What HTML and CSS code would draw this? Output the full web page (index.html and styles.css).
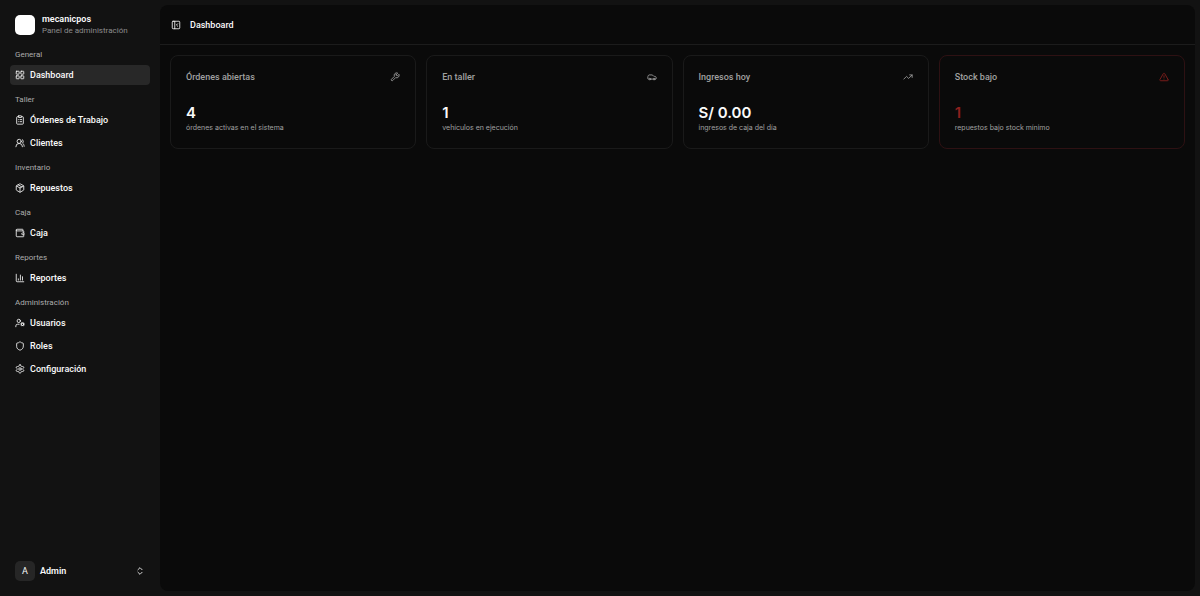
FILE: index.html
```html
<!DOCTYPE html>
<html lang="es">

<head>
    <meta charset="UTF-8">
    <meta name="viewport" content="width=device-width, initial-scale=1.0">
    <title>Dashboard - mecanicpos</title>
    <link rel="stylesheet" href="styles.css">
</head>

<body>
    <aside class="sidebar">
        <a href="#" class="brand">
            <span class="brand-logo"></span>
            <span class="brand-text">
                <span class="brand-name">mecanicpos</span>
                <span class="brand-sub">Panel de administración</span>
            </span>
        </a>

        <nav class="nav">
            <div class="nav-group">
                <div class="nav-label">General</div>
                <a href="#" class="nav-item active">
                    <svg class="icon" viewBox="0 0 24 24"><rect x="3" y="3" width="7" height="7" rx="1"/><rect x="14" y="3" width="7" height="7" rx="1"/><rect x="14" y="14" width="7" height="7" rx="1"/><rect x="3" y="14" width="7" height="7" rx="1"/></svg>
                    Dashboard
                </a>
            </div>

            <div class="nav-group">
                <div class="nav-label">Taller</div>
                <a href="#" class="nav-item">
                    <svg class="icon" viewBox="0 0 24 24"><rect x="8" y="2" width="8" height="4" rx="1"/><path d="M16 4h2a2 2 0 0 1 2 2v14a2 2 0 0 1-2 2H6a2 2 0 0 1-2-2V6a2 2 0 0 1 2-2h2"/><path d="M12 11h4M12 16h4M8 11h.01M8 16h.01"/></svg>
                    Órdenes de Trabajo
                </a>
                <a href="#" class="nav-item">
                    <svg class="icon" viewBox="0 0 24 24"><path d="M18 21a8 8 0 0 0-16 0"/><circle cx="10" cy="8" r="5"/><path d="M22 20c0-3.37-2-6.5-4-8a5 5 0 0 0-.45-8.3"/></svg>
                    Clientes
                </a>
            </div>

            <div class="nav-group">
                <div class="nav-label">Inventario</div>
                <a href="#" class="nav-item">
                    <svg class="icon" viewBox="0 0 24 24"><path d="M11 21.73a2 2 0 0 0 2 0l7-4A2 2 0 0 0 21 16V8a2 2 0 0 0-1-1.73l-7-4a2 2 0 0 0-2 0l-7 4A2 2 0 0 0 3 8v8a2 2 0 0 0 1 1.73z"/><path d="M12 22V12"/><path d="M3.29 7 12 12l8.71-5"/><path d="m7.5 4.27 9 5.15"/></svg>
                    Repuestos
                </a>
            </div>

            <div class="nav-group">
                <div class="nav-label">Caja</div>
                <a href="#" class="nav-item">
                    <svg class="icon" viewBox="0 0 24 24"><path d="M19 7V4a1 1 0 0 0-1-1H5a2 2 0 0 0 0 4h15a1 1 0 0 1 1 1v4h-3a2 2 0 0 0 0 4h3a1 1 0 0 0 1-1v-2a1 1 0 0 0-1-1"/><path d="M3 5v14a2 2 0 0 0 2 2h15a1 1 0 0 0 1-1v-4"/></svg>
                    Caja
                </a>
            </div>

            <div class="nav-group">
                <div class="nav-label">Reportes</div>
                <a href="#" class="nav-item">
                    <svg class="icon" viewBox="0 0 24 24"><path d="M3 3v16a2 2 0 0 0 2 2h16"/><path d="M18 17V9"/><path d="M13 17V5"/><path d="M8 17v-3"/></svg>
                    Reportes
                </a>
            </div>

            <div class="nav-group">
                <div class="nav-label">Administración</div>
                <a href="#" class="nav-item">
                    <svg class="icon" viewBox="0 0 24 24"><path d="M10 15H6a4 4 0 0 0-4 4v2"/><circle cx="9" cy="7" r="4"/><circle cx="18" cy="15" r="3"/><path d="m14.3 16.5.9-.3M15.2 13.9l-.9-.3M16.6 18.7l.3-.9M19.1 12.2l.3-.9M19.6 18.7l-.4-1M16.8 12.3l-.4-1M20.7 13.8l1-.4M21.7 16.6l-.9-.3"/></svg>
                    Usuarios
                </a>
                <a href="#" class="nav-item">
                    <svg class="icon" viewBox="0 0 24 24"><path d="M20 13c0 5-3.5 7.5-7.66 8.95a1 1 0 0 1-.67-.01C7.5 20.5 4 18 4 13V6a1 1 0 0 1 1-1c2 0 4.5-1.2 6.24-2.72a1.17 1.17 0 0 1 1.52 0C14.51 3.81 17 5 19 5a1 1 0 0 1 1 1z"/></svg>
                    Roles
                </a>
                <a href="#" class="nav-item">
                    <svg class="icon" viewBox="0 0 24 24"><path d="M12.22 2h-.44a2 2 0 0 0-2 2v.18a2 2 0 0 1-1 1.73l-.43.25a2 2 0 0 1-2 0l-.15-.08a2 2 0 0 0-2.73.73l-.22.38a2 2 0 0 0 .73 2.73l.15.1a2 2 0 0 1 1 1.72v.51a2 2 0 0 1-1 1.74l-.15.09a2 2 0 0 0-.73 2.73l.22.38a2 2 0 0 0 2.73.73l.15-.08a2 2 0 0 1 2 0l.43.25a2 2 0 0 1 1 1.73V20a2 2 0 0 0 2 2h.44a2 2 0 0 0 2-2v-.18a2 2 0 0 1 1-1.73l.43-.25a2 2 0 0 1 2 0l.15.08a2 2 0 0 0 2.73-.73l.22-.39a2 2 0 0 0-.73-2.73l-.15-.08a2 2 0 0 1-1-1.74v-.5a2 2 0 0 1 1-1.74l.15-.09a2 2 0 0 0 .73-2.73l-.22-.38a2 2 0 0 0-2.73-.73l-.15.08a2 2 0 0 1-2 0l-.43-.25a2 2 0 0 1-1-1.73V4a2 2 0 0 0-2-2z"/><circle cx="12" cy="12" r="3"/></svg>
                    Configuración
                </a>
            </div>
        </nav>

        <button type="button" class="user">
            <span class="avatar">A</span>
            <span class="user-name">Admin</span>
            <svg class="icon" viewBox="0 0 24 24"><path d="m7 15 5 5 5-5"/><path d="m7 9 5-5 5 5"/></svg>
        </button>
    </aside>

    <main class="main">
        <header class="topbar">
            <button type="button" class="toggle" aria-label="Toggle sidebar">
                <svg class="icon" viewBox="0 0 24 24"><rect x="3" y="3" width="18" height="18" rx="2"/><path d="M9 3v18"/><path d="m16 15-3-3 3-3"/></svg>
            </button>
            <h1 class="page-title">Dashboard</h1>
        </header>

        <section class="cards">
            <article class="card">
                <div class="card-header">
                    <h2 class="card-title">Órdenes abiertas</h2>
                    <svg class="icon" viewBox="0 0 24 24"><path d="M14.7 6.3a1 1 0 0 0 0 1.4l1.6 1.6a1 1 0 0 0 1.4 0l3.77-3.77a6 6 0 0 1-7.94 7.94l-6.91 6.91a2.12 2.12 0 0 1-3-3l6.91-6.91a6 6 0 0 1 7.94-7.94l-3.76 3.76z"/></svg>
                </div>
                <div class="card-value">4</div>
                <p class="card-note">órdenes activas en el sistema</p>
            </article>

            <article class="card">
                <div class="card-header">
                    <h2 class="card-title">En taller</h2>
                    <svg class="icon" viewBox="0 0 24 24"><path d="M19 17h2c.6 0 1-.4 1-1v-3c0-.9-.7-1.7-1.5-1.9C18.7 10.6 16 10 16 10s-1.3-1.4-2.2-2.3c-.5-.4-1.1-.7-1.8-.7H5c-.6 0-1.1.4-1.4.9l-1.4 2.9A3.7 3.7 0 0 0 2 12v4c0 .6.4 1 1 1h2"/><circle cx="7" cy="17" r="2"/><path d="M9 17h6"/><circle cx="17" cy="17" r="2"/></svg>
                </div>
                <div class="card-value">1</div>
                <p class="card-note">vehículos en ejecución</p>
            </article>

            <article class="card">
                <div class="card-header">
                    <h2 class="card-title">Ingresos hoy</h2>
                    <svg class="icon" viewBox="0 0 24 24"><path d="m22 7-8.5 8.5-5-5L2 17"/><path d="M16 7h6v6"/></svg>
                </div>
                <div class="card-value">S/ 0.00</div>
                <p class="card-note">ingresos de caja del día</p>
            </article>

            <article class="card card-alert">
                <div class="card-header">
                    <h2 class="card-title">Stock bajo</h2>
                    <svg class="icon" viewBox="0 0 24 24"><path d="m21.73 18-8-14a2 2 0 0 0-3.48 0l-8 14A2 2 0 0 0 4 21h16a2 2 0 0 0 1.73-3"/><path d="M12 9v4"/><path d="M12 17h.01"/></svg>
                </div>
                <div class="card-value">1</div>
                <p class="card-note">repuestos bajo stock mínimo</p>
            </article>
        </section>
    </main>
</body>

</html>
```
FILE: styles.css
```css
* {
    box-sizing: border-box;
}

body {
    margin: 0;
    min-height: 100vh;
    display: flex;
    background-color: #121212;
    color: #fafafa;
    font-family: Roboto, "Liberation Sans", sans-serif;
    font-size: 9px;
    line-height: 12px;
}

h1,
h2,
p {
    margin: 0;
    font-size: inherit;
    font-weight: inherit;
}

a {
    color: inherit;
    text-decoration: none;
}

button {
    border: none;
    background: none;
    color: inherit;
    font: inherit;
    cursor: pointer;
}

.icon {
    width: 10px;
    height: 10px;
    flex-shrink: 0;
    fill: none;
    stroke: currentColor;
    stroke-width: 2;
    stroke-linecap: round;
    stroke-linejoin: round;
}

/* Sidebar */
.sidebar {
    width: 160px;
    flex-shrink: 0;
    padding: 10px;
    display: flex;
    flex-direction: column;
}

.brand {
    display: flex;
    align-items: center;
    gap: 7px;
    height: 30px;
    padding: 0 5px;
}

.brand-logo {
    width: 20px;
    height: 20px;
    border-radius: 5px;
    background-color: #fff;
}

.brand-text {
    display: flex;
    flex-direction: column;
    line-height: 11px;
}

.brand-name {
    font-weight: 600;
}

.brand-sub {
    font-size: 8px;
    color: #8c8c8c;
}

.nav {
    flex: 1;
    display: flex;
    flex-direction: column;
    gap: 5px;
    padding-top: 5px;
}

.nav-group {
    display: flex;
    flex-direction: column;
}

.nav-label {
    padding: 0 5px;
    font-size: 8px;
    font-weight: 400;
    line-height: 20px;
    color: #acacac;
}

.nav-item {
    display: flex;
    align-items: center;
    gap: 5px;
    height: 20px;
    padding: 0 5px;
    border-radius: 4px;
    font-weight: 500;
}

.nav-item + .nav-item {
    margin-top: 3px;
}

.nav-item:hover,
.nav-item.active {
    background-color: #282828;
}

.user {
    display: flex;
    align-items: center;
    gap: 5px;
    height: 30px;
    padding: 0 5px;
    text-align: left;
}

.avatar {
    width: 20px;
    height: 20px;
    border-radius: 5px;
    background-color: #262626;
    line-height: 20px;
    text-align: center;
}

.user-name {
    flex: 1;
    font-weight: 600;
}

/* Content */
.main {
    flex: 1;
    margin: 5px 5px 5px 0;
    border-radius: 8px;
    background-color: #0a0a0a;
}

.topbar {
    display: flex;
    align-items: center;
    gap: 6px;
    height: 40px;
    padding: 0 8px;
    border-bottom: 1px solid #1c1c1c;
}

.toggle {
    display: flex;
    padding: 3px;
}

.page-title {
    font-weight: 500;
}

.cards {
    display: grid;
    grid-template-columns: repeat(4, 1fr);
    gap: 10px;
    padding: 10px;
}

.card {
    padding: 15px;
    border: 1px solid #1a1a1a;
    border-radius: 8px;
}

.card-header {
    display: flex;
    align-items: center;
    justify-content: space-between;
    margin-bottom: 20px;
    color: #a1a1a1;
}

.card-title {
    font-weight: 500;
}

.card-value {
    font-family: Inter, sans-serif;
    font-size: 15px;
    font-weight: 600;
    line-height: 20px;
}

.card-note {
    font-family: Inter, sans-serif;
    font-size: 7px;
    line-height: 10px;
    color: #a1a1a1;
}

.card-alert {
    border-color: #2e1113;
}

.card-alert .icon,
.card-alert .card-value {
    color: #8e201e;
}
```
